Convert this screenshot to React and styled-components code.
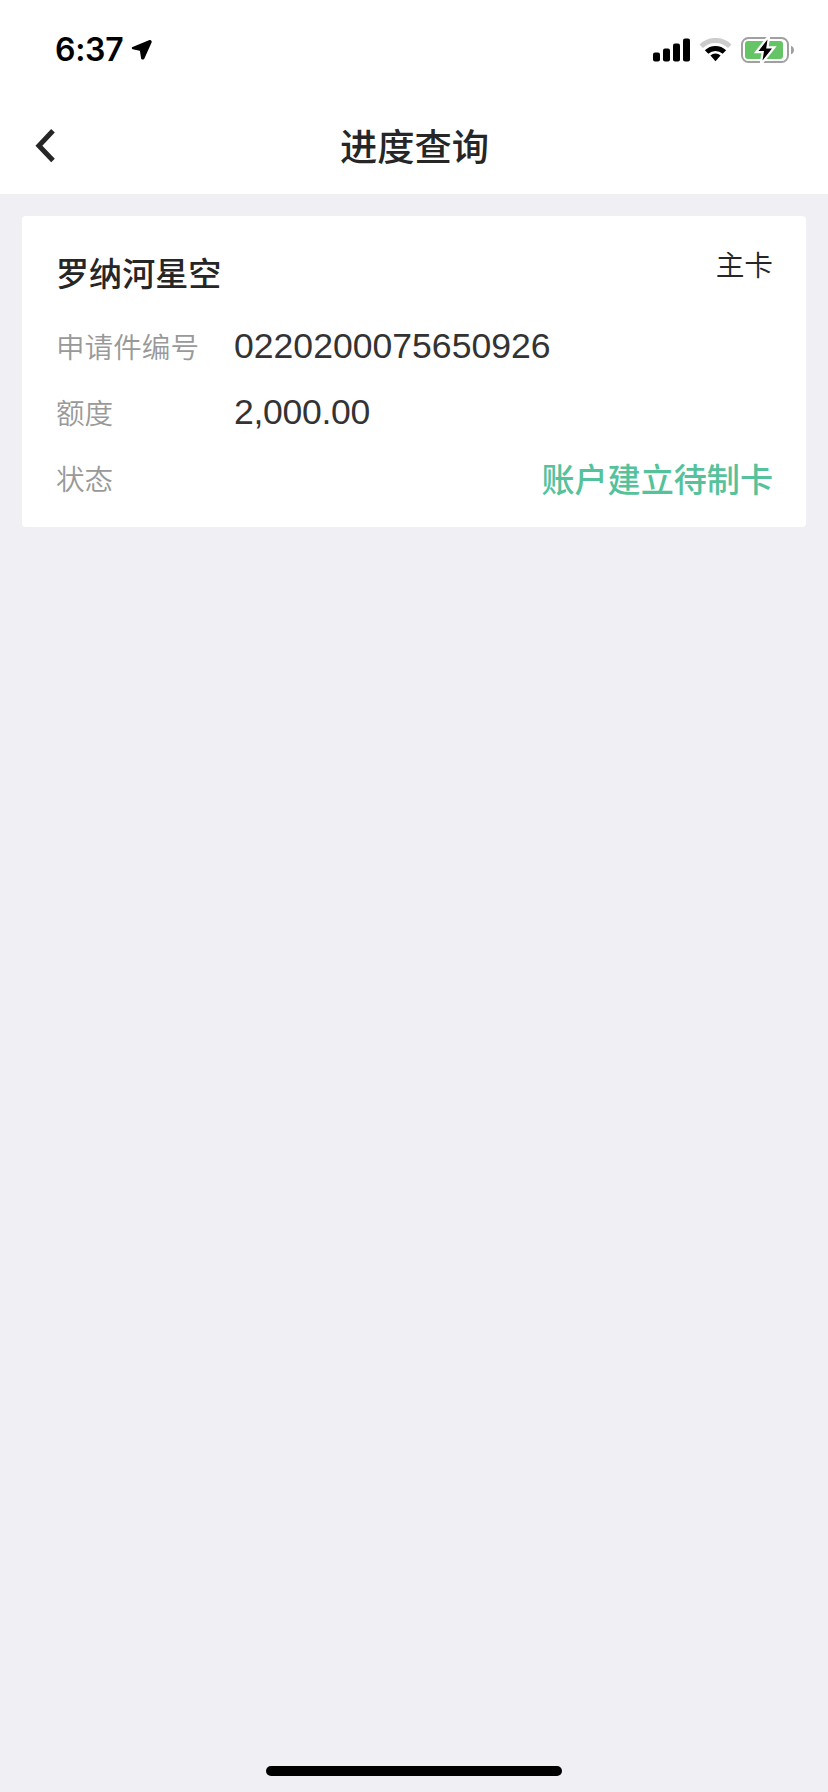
import React from "react";
import styled, { createGlobalStyle } from "styled-components";

const Global = createGlobalStyle`
  body { margin: 0; background: #efeff4; }
  * { box-sizing: border-box; }
`;
const Screen = styled.div`
  width: 828px;
  height: 1792px;
  display: flex;
  flex-direction: column;
  background: #efeff4;
  color: #262626;
  font-family: "Noto Sans CJK SC", sans-serif;
  overflow: hidden;
`;
const StatusBar = styled.header`
  height: 98px;
  display: flex;
  justify-content: space-between;
  align-items: center;
  padding: 2px 33px 0 55px;
  background: #fff;
  color: #000;
`;
const Clock = styled.div`
  display: flex;
  align-items: center;
  gap: 8px;
  font: 600 32px/40px Inter, sans-serif;
  letter-spacing: -0.3px;
`;
const Indicators = styled.div`
  display: flex;
  align-items: center;
`;
const Spacer = styled.span`
  width: 8px;
`;
const NavBar = styled.nav`
  height: 96px;
  display: grid;
  grid-template-columns: 100px 1fr 100px;
  align-items: center;
  background: #fff;
`;
const BackButton = styled.button`
  height: 96px;
  padding: 0 0 0 34px;
  border: 0;
  background: none;
  display: flex;
  align-items: center;
`;
const Title = styled.h1`
  margin: 0;
  padding: 0 0 3px 1px;
  text-align: center;
  font-size: 37.3px;
  line-height: 50px;
  font-weight: 500;
`;
const Card = styled.section`
  margin: 22px 22px 0;
  height: 311px;
  padding: 34px 33px 0 34px;
  border-radius: 4px;
  background: #fff;
`;
const CardHeader = styled.div`
  height: 63px;
  display: flex;
  justify-content: space-between;
  align-items: flex-start;
`;
const Name = styled.h2`
  margin: 0;
  font-size: 33.1px;
  line-height: 44px;
  font-weight: 500;
`;
const CardType = styled.span`
  font-size: 28.7px;
  line-height: 28px;
  font-weight: 350;
`;
const Row = styled.div`
  height: 66px;
  display: flex;
  align-items: center;
`;
const Label = styled.span`
  width: 178px;
  font-size: 28.6px;
  line-height: 40px;
  font-weight: 350;
  color: #999;
`;
const Value = styled.span`
  font-family: "Liberation Sans", sans-serif;
  font-size: 35.6px;
  letter-spacing: ${(p) => p.$tracking || 0}px;
  line-height: 46px;
  color: #333;
`;
const Status = styled.span`
  margin-left: auto;
  padding-bottom: 1px;
  font-size: 33.1px;
  line-height: 46px;
  font-weight: 500;
  color: #56c29b;
`;
const HomeArea = styled.footer`
  margin-top: auto;
  height: 26px;
  display: flex;
  justify-content: center;
`;
const HomeBar = styled.div`
  width: 296px;
  height: 10px;
  border-radius: 5px;
  background: #000;
`;

const LocationIcon = () => (
  <svg width="22" height="22" viewBox="0 0 22 22">
    <path
      d="M19 2.200 2 9 10 10.800 11.300 19.200H12.200L19.600 2.800Z"
      stroke="#000"
      strokeWidth="2.400"
      strokeLinejoin="round"
    />
  </svg>
);
const SignalIcon = () => (
  <svg width="38" height="24" viewBox="0 0 38 24">
    <rect x="0" y="14.500" width="7" height="9" rx="2" />
    <rect x="10" y="10.500" width="7" height="13" rx="2" />
    <rect x="20" y="5.500" width="7" height="18" rx="2" />
    <rect x="30" y="0.500" width="7" height="23" rx="2" />
  </svg>
);
const WifiIcon = () => (
  <svg width="34" height="24" viewBox="0 0 34 24" fill="none" strokeWidth="5">
    <path d="M2.200 8.300a20.400 20.400 0 0 1 28.600 0" stroke="#ccc" />
    <path d="M7.600 14a12.900 12.900 0 0 1 17.800 0" stroke="#000" />
    <path d="M16.500 23.300 11.400 17.600a7.300 7.300 0 0 1 10.200 0Z" fill="#000" />
  </svg>
);
const BatteryIcon = () => (
  <svg width="54" height="26" viewBox="0 0 54 26">
    <rect x="1" y="1" width="46" height="24" rx="6.500" fill="#fff" stroke="#a0a0a0" strokeWidth="2" />
    <rect x="4" y="4" width="38" height="18" rx="3" fill="#65c466" />
    <path d="M50 8.700c4 1.400 4 7.200 0 8.600Z" fill="#a0a0a0" />
    <path d="M26.500 2.500 17.500 14H23L21.500 23.500 31 11.500H25.200Z" fill="#000" stroke="#fff" strokeWidth="4.500" paintOrder="stroke" />
  </svg>
);
const BackIcon = () => (
  <svg width="24" height="36" viewBox="0 0 24 36" fill="none">
    <path d="M19 2.800 4.900 17.700 19 32.500" stroke="#262626" strokeWidth="5" />
  </svg>
);

export default function App() {
  return (
    <Screen>
      <Global />
      <StatusBar>
        <Clock>6:37<LocationIcon /></Clock>
        <Indicators>
          <SignalIcon />
          <Spacer />
          <WifiIcon />
          <Spacer />
          <BatteryIcon />
        </Indicators>
      </StatusBar>
      <NavBar>
        <BackButton aria-label="返回"><BackIcon /></BackButton>
        <Title>进度查询</Title>
      </NavBar>
      <Card>
        <CardHeader>
          <Name>罗纳河星空</Name>
          <CardType>主卡</CardType>
        </CardHeader>
        <Row><Label>申请件编号</Label><Value>0220200075650926</Value></Row>
        <Row><Label>额度</Label><Value $tracking={-0.3}>2,000.00</Value></Row>
        <Row><Label>状态</Label><Status>账户建立待制卡</Status></Row>
      </Card>
      <HomeArea><HomeBar /></HomeArea>
    </Screen>
  );
}
